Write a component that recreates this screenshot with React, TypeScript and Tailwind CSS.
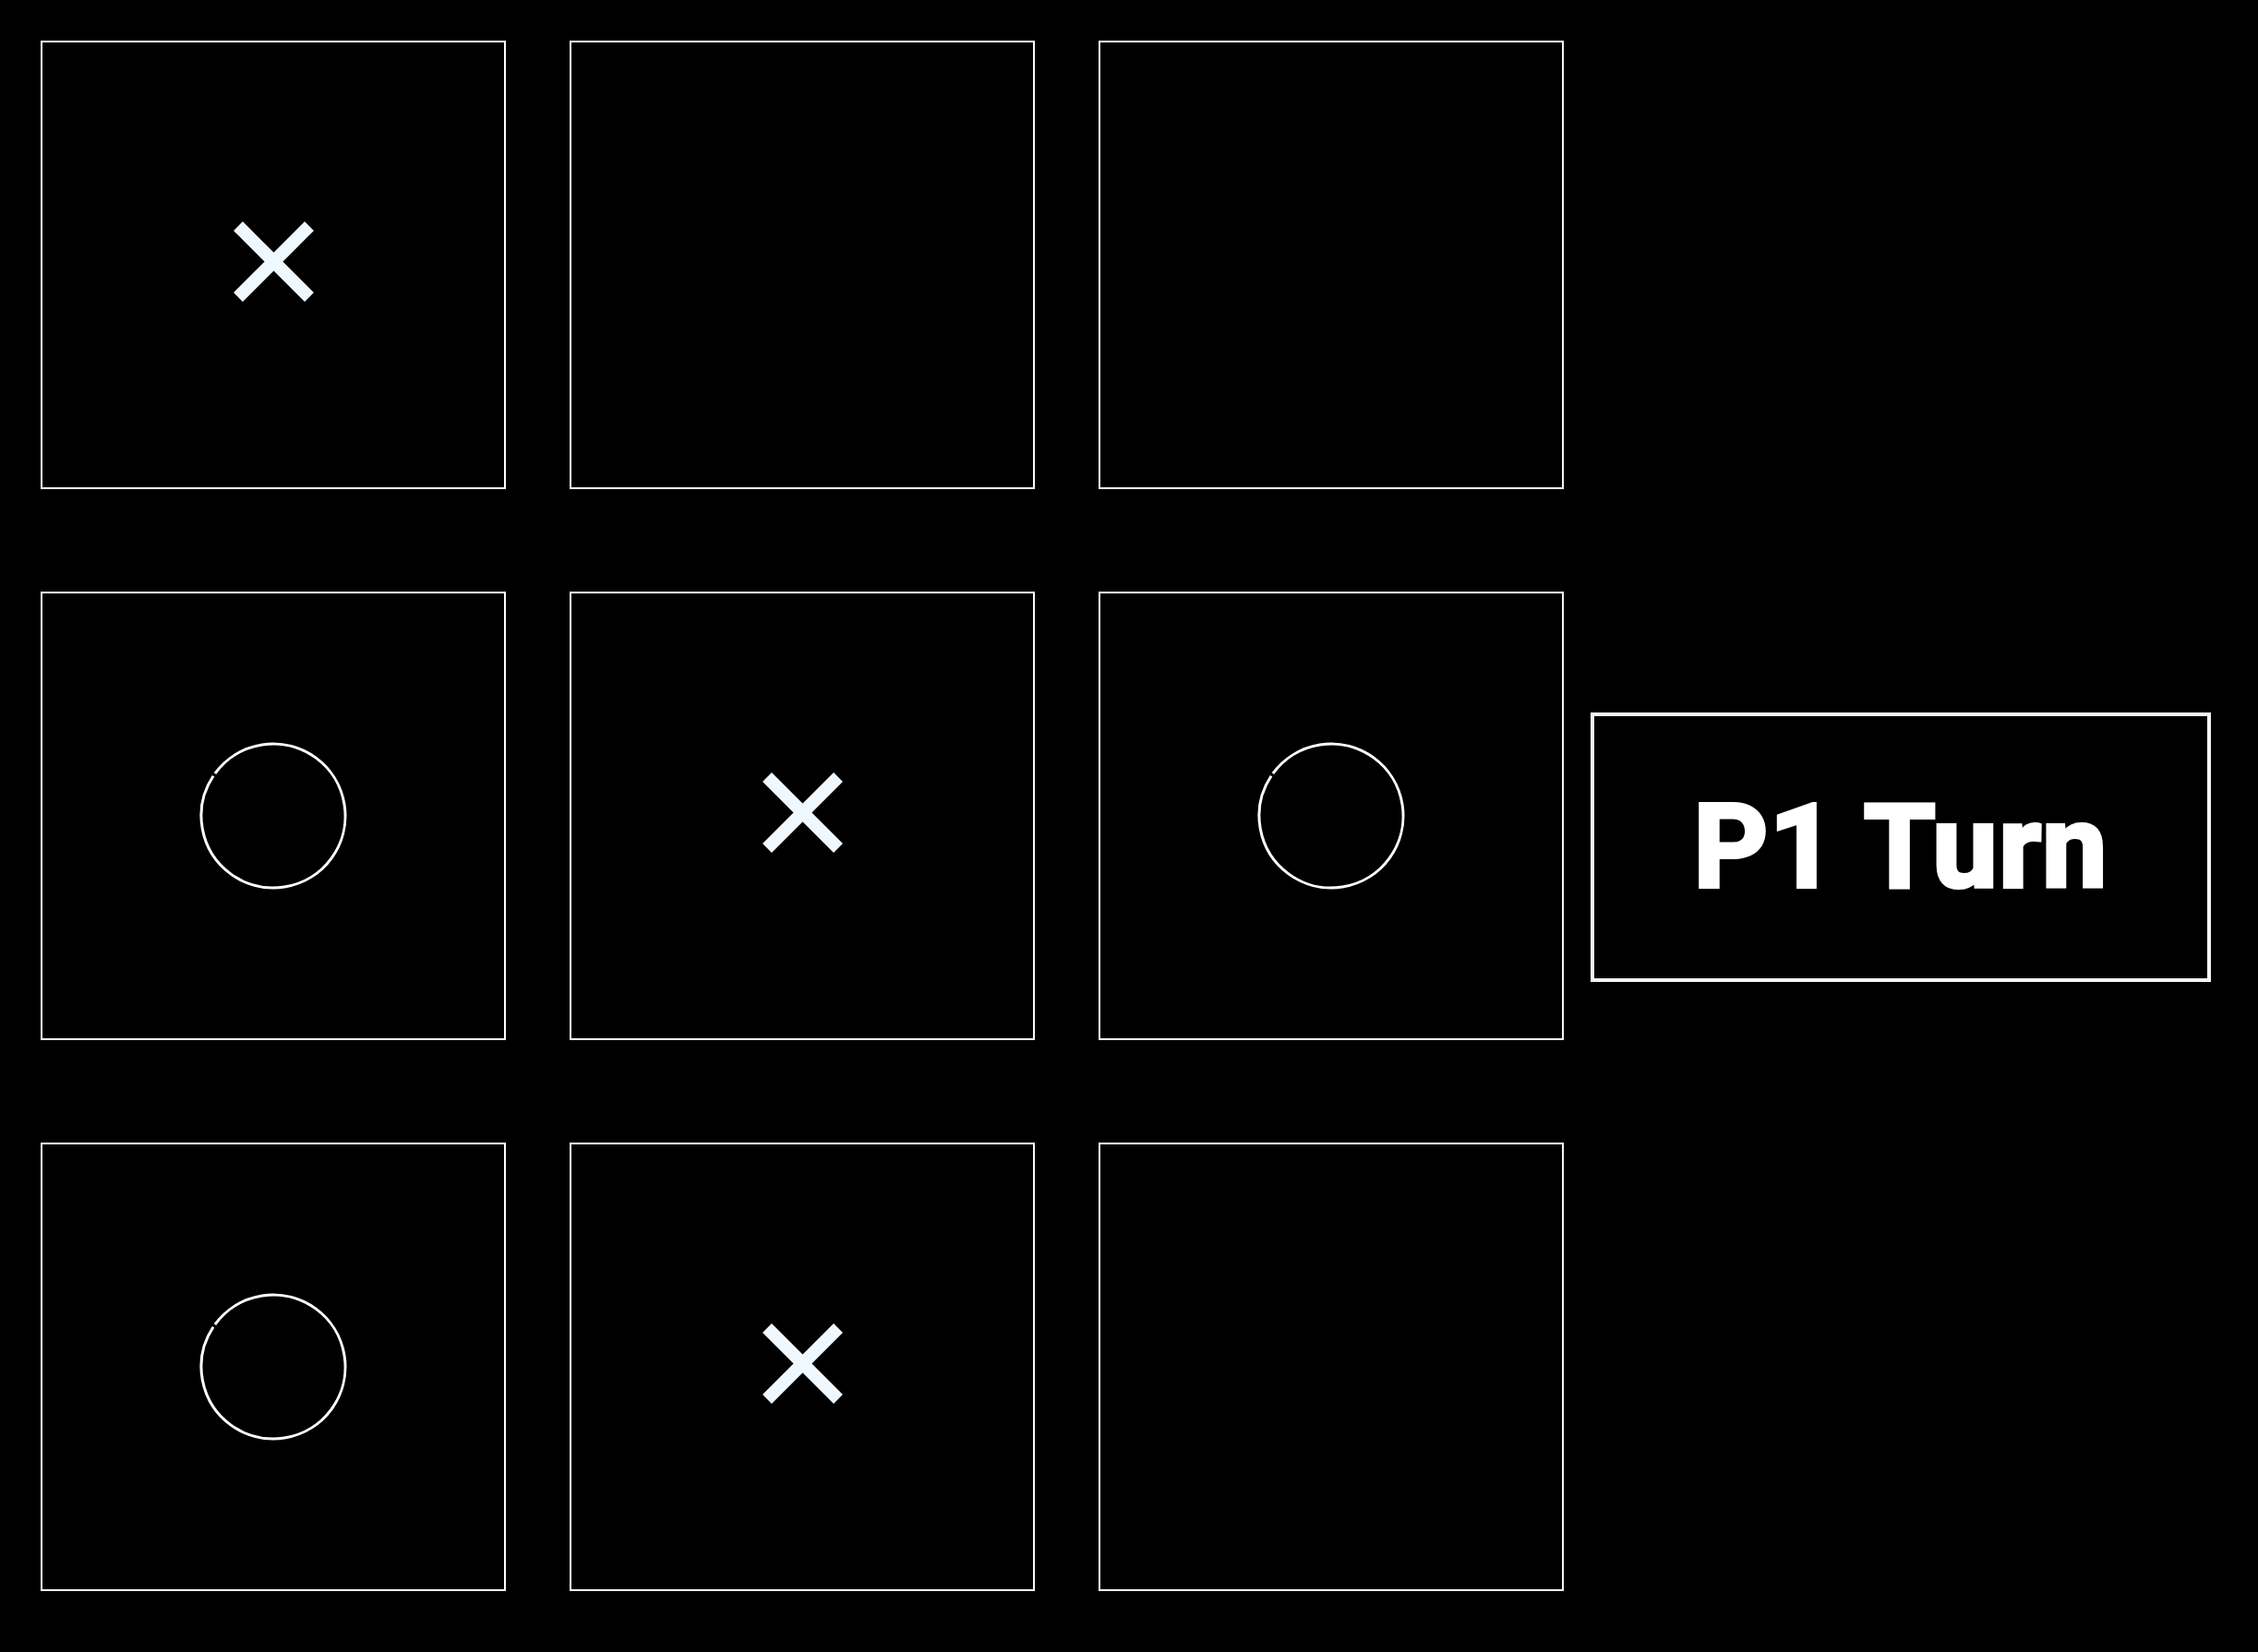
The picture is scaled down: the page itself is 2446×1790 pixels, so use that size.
type Mark = "x" | "o" | null;

const board: Mark[] = ["x", null, null, "o", "x", "o", "o", "x", null];

function Cross() {
	return (
		<svg width="87" height="87" viewBox="0 0 87 87" className="mb-[7px]">
			<line x1="5" y1="5" x2="82" y2="82" stroke="#f0f8ff" strokeWidth="14" />
			<line x1="82" y1="5" x2="5" y2="82" stroke="#f0f8ff" strokeWidth="14" />
		</svg>
	);
}

function Circle() {
	// ring with a small break at the upper left, like the stroke never quite closed
	return (
		<svg width="160" height="160" viewBox="0 0 160 160">
			<circle
				cx="80"
				cy="80"
				r="78"
				fill="none"
				stroke="#ffffff"
				strokeWidth="3"
				strokeDasharray="486 4"
				transform="rotate(-144 80 80)"
			/>
		</svg>
	);
}

export default function App() {
	return (
		<div className="min-h-[1790px] w-full bg-black flex items-start pl-[44px] pt-[44px]">
			<div className="grid grid-cols-[repeat(3,504px)] grid-rows-[repeat(3,486px)] gap-x-[69px] gap-y-[111px]">
				{board.map((m, i) => (
					<div
						key={i}
						className="border-2 border-white bg-black flex items-center justify-center"
					>
						{m === "x" && <Cross />}
						{m === "o" && <Circle />}
					</div>
				))}
			</div>
			<div className="ml-[29px] mt-[728px] w-[672px] h-[292px] border-4 border-[#f5f5f5] flex items-center justify-center">
				<span
					className="text-white font-bold text-[126px] leading-none tracking-[1px] [-webkit-text-stroke:4px_white]"
					style={{ fontFamily: "Roboto, 'Liberation Sans', sans-serif" }}
				>
					P1 Turn
				</span>
			</div>
		</div>
	);
}
